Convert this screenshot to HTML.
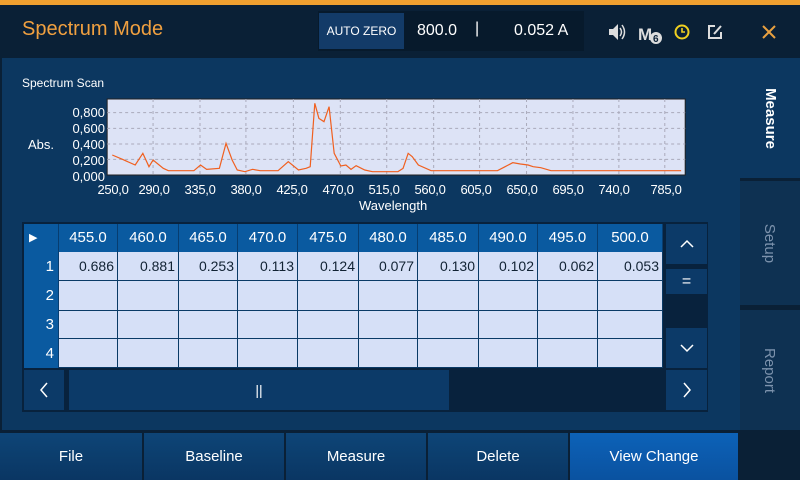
<!DOCTYPE html>
<html><head><meta charset="utf-8"><style>
*{margin:0;padding:0;box-sizing:border-box}
body{width:800px;height:480px;overflow:hidden;background:#0a2036;font-family:"Liberation Sans",sans-serif;position:relative;color:#fff}
.a{position:absolute}
.c{display:flex;align-items:center;justify-content:center}
.btn{background:linear-gradient(#0e4577,#0a3663);top:433px;height:47px;font-size:15px}
.cell{position:absolute;background:#d6e0f7;border-right:1px solid #0a3a66;border-bottom:1px solid #0a3a66;color:#123;font-size:14px;text-align:right;padding-right:3px;line-height:29px}
.hd{position:absolute;background:#0a5aa0;color:#fff;font-size:15px;text-align:center;line-height:28px;border-right:1px solid #073d70}
.tab{background:#0e3152;left:740px;width:60px}
.vt{transform:rotate(90deg);font-size:15px;white-space:nowrap}
.xl{position:absolute;top:182px;width:50px;margin-left:-25px;text-align:center;font-size:13px;letter-spacing:-0.3px}
</style></head><body>
<div class="a" style="left:0;top:0;width:800px;height:5px;background:#f0a030"></div>
<div class="a" style="left:22px;top:18px;font-size:20px;color:#f0a040">Spectrum Mode</div>
<div class="a" style="left:318px;top:11px;width:266px;height:40px;background:#071a2c"></div>
<div class="a c" style="left:319px;top:13px;width:85px;height:36px;background:#133b68;font-size:12px">AUTO ZERO</div>
<div class="a" style="left:417px;top:22px;font-size:16px">800.0</div>
<div class="a" style="left:475px;top:20px;font-size:16px">|</div>
<div class="a" style="left:514px;top:22px;font-size:16px">0.052 A</div>
<svg class="a" style="left:590px;top:10px" width="210" height="45">
<path d="M19 19h4l5-5v16l-5-5h-4z" fill="#ddd"/><path d="M30 18q3 4 0 8M32 15q5 7 0 14" stroke="#ddd" fill="none" stroke-width="1.5"/>
<text x="48" y="30" font-size="17" font-weight="bold" fill="#ddd" font-family="Liberation Sans">M</text>
<circle cx="66" cy="28" r="6" fill="#ddd"/><text x="63" y="32" font-size="10" fill="#0a2036" font-weight="bold" font-family="Liberation Sans">6</text>
<circle cx="92" cy="22" r="6.5" stroke="#f0d020" stroke-width="2" fill="none"/><path d="M92 18v4h3" stroke="#f0d020" stroke-width="1.6" fill="none"/>
<path d="M125 16h-6v12h12v-6" stroke="#ddd" stroke-width="2" fill="none"/><path d="M124 24l7-8" stroke="#ddd" stroke-width="2"/>
<path d="M173 16l12 12M185 16l-12 12" stroke="#e8a040" stroke-width="2"/>
</svg>
<div class="a" style="left:2px;top:58px;width:738px;height:372px;background:#0c3760"></div>
<div class="a" style="left:740px;top:58px;width:60px;height:120px;background:#0c3760"></div>
<div class="a tab" style="top:181px;height:124px"></div>
<div class="a tab" style="top:310px;height:120px"></div>
<div class="a tab" style="top:432px;height:48px;background:#0a2036"></div>
<div class="a c" style="left:740px;top:58px;width:60px;height:120px"><span class="vt" style="font-weight:bold">Measure</span></div>
<div class="a c" style="left:740px;top:181px;width:60px;height:124px"><span class="vt" style="color:#7d93ad">Setup</span></div>
<div class="a c" style="left:740px;top:310px;width:60px;height:120px"><span class="vt" style="color:#7d93ad">Report</span></div>
<div class="a" style="left:22px;top:76px;font-size:12px">Spectrum Scan</div>
<svg class="a" style="left:0;top:0" width="800" height="220" viewBox="0 0 1568 660" preserveAspectRatio="none">
<rect x="210" y="297" width="1133" height="228" fill="#dde3f6" stroke="#222" vector-effect="non-scaling-stroke"/>
<g stroke="#aab" stroke-dasharray="3 3">
<path d="M210 338H1343M210 385H1343M210 432H1343M210 478H1343M300 297V525M392 297V525M482 297V525M575 297V525M667 297V525M758 297V525M850 297V525M940 297V525M1032 297V525M1123 297V525M1213 297V525M1303 297V525" vector-effect="non-scaling-stroke"/></g>
<polyline fill="none" stroke="#f06020" stroke-width="1.2" vector-effect="non-scaling-stroke" points="220,465 240,478 265,495 280,460 292,500 300,480 320,505 330,512 380,512 393,495 405,508 430,505 443,430 455,480 465,510 480,515 495,508 510,512 545,512 565,485 585,510 600,505 608,500 617,310 625,355 635,365 645,320 655,460 668,498 678,495 688,508 698,497 715,510 730,515 780,515 790,505 800,460 808,470 820,495 845,512 975,512 990,500 1005,488 1020,492 1035,495 1045,500 1060,503 1080,512 1335,512"/>
</svg>
<div class="a" style="left:63px;top:105px;font-size:13px;text-align:right;line-height:16px;width:42px">0,800<br>0,600<br>0,400<br>0,200<br>0,000</div>
<div class="a" style="left:28px;top:137px;font-size:13px">Abs.</div>
<div class="xl" style="left:113px">250,0</div>
<div class="xl" style="left:154px">290,0</div>
<div class="xl" style="left:200px">335,0</div>
<div class="xl" style="left:246px">380,0</div>
<div class="xl" style="left:292px">425,0</div>
<div class="xl" style="left:338px">470,0</div>
<div class="xl" style="left:384px">515,0</div>
<div class="xl" style="left:430px">560,0</div>
<div class="xl" style="left:476px">605,0</div>
<div class="xl" style="left:522px">650,0</div>
<div class="xl" style="left:568px">695,0</div>
<div class="xl" style="left:614px">740,0</div>
<div class="xl" style="left:666px">785,0</div>
<div class="a" style="left:359px;top:198px;font-size:13px">Wavelength</div>
<div class="a" style="left:22px;top:222px;width:686px;height:190px;background:#08223d"></div>
<div class="hd" style="left:24px;top:224px;width:35px;height:28px;text-align:left;padding-left:5px;font-size:11px">▶</div>
<div id="t"></div>
<div class="a c" style="left:666px;top:224px;width:41px;height:40px;background:#0c3a68"><svg width="14" height="10"><path d="M1 8l6-6 6 6" stroke="#fff" stroke-width="1.5" fill="none"/></svg></div>
<div class="a c" style="left:666px;top:269px;width:41px;height:25px;background:#0c3a68;font-size:16px">=</div>
<div class="a c" style="left:666px;top:328px;width:41px;height:40px;background:#0c3a68"><svg width="14" height="10"><path d="M1 2l6 6 6-6" stroke="#fff" stroke-width="1.5" fill="none"/></svg></div>
<div class="a c" style="left:24px;top:370px;width:40px;height:40px;background:#0c3a68"><svg width="10" height="16"><path d="M8 1L2 8l6 7" stroke="#fff" stroke-width="1.5" fill="none"/></svg></div>
<div class="a c" style="left:69px;top:370px;width:380px;height:40px;background:#0c3a68;font-size:14px">||</div>
<div class="a c" style="left:666px;top:370px;width:41px;height:40px;background:#0c3a68"><svg width="10" height="16"><path d="M2 1l6 7-6 7" stroke="#fff" stroke-width="1.5" fill="none"/></svg></div>
<div class="a c btn" style="left:0;width:142px">File</div>
<div class="a c btn" style="left:144px;width:140px">Baseline</div>
<div class="a c btn" style="left:286px;width:140px">Measure</div>
<div class="a c btn" style="left:428px;width:140px">Delete</div>
<div class="a c btn" style="left:570px;width:168px;background:linear-gradient(#0d62b8,#0a52a0)">View Change</div>
<script>
var xs=[59,118,179,238,298,359,418,479,538,598,663],ys=[252,281,311,339,368];
var h=["455.0","460.0","465.0","470.0","475.0","480.0","485.0","490.0","495.0","500.0"];
var v=["0.686","0.881","0.253","0.113","0.124","0.077","0.130","0.102","0.062","0.053"];
var s="";
for(var i=0;i<10;i++){s+='<div class="hd" style="left:'+xs[i]+'px;top:224px;width:'+(xs[i+1]-xs[i])+'px;height:28px">'+h[i]+'</div>';}
for(var r=0;r<4;r++){s+='<div class="hd" style="left:24px;top:'+ys[r]+'px;width:35px;height:'+(ys[r+1]-ys[r])+'px;text-align:right;padding-right:4px;line-height:'+(ys[r+1]-ys[r])+'px;font-size:15px">'+(r+1)+'</div>';
for(var i=0;i<10;i++){s+='<div class="cell" style="left:'+xs[i]+'px;top:'+ys[r]+'px;width:'+(xs[i+1]-xs[i])+'px;height:'+(ys[r+1]-ys[r])+'px">'+(r==0?v[i]:'')+'</div>';}}
document.getElementById('t').innerHTML=s;
</script>
</body></html>
